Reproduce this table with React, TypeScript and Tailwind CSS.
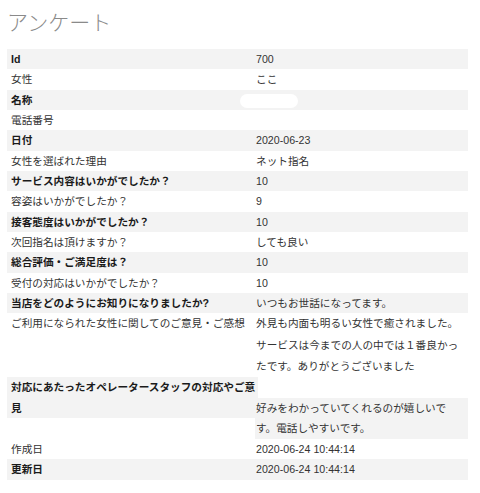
import React from "react";

type Row = { label: string; value: React.ReactNode };

const rows: Row[] = [
  { label: "Id", value: "700" },
  { label: "女性", value: "ここ" },
  { label: "名称", value: "" },
  { label: "電話番号", value: "" },
  { label: "日付", value: "2020-06-23" },
  { label: "女性を選ばれた理由", value: "ネット指名" },
  { label: "サービス内容はいかがでしたか？", value: "10" },
  { label: "容姿はいかがでしたか？", value: "9" },
  { label: "接客態度はいかがでしたか？", value: "10" },
  { label: "次回指名は頂けますか？", value: "しても良い" },
  { label: "総合評価・ご満足度は？", value: "10" },
  { label: "受付の対応はいかがでしたか？", value: "10" },
  { label: "当店をどのようにお知りになりましたか?", value: "いつもお世話になってます。" },
];

const font = "font-['Liberation_Sans','Noto_Sans_CJK_JP',sans-serif]";

function SimpleRow({ row, index }: { row: Row; index: number }) {
  const striped = index % 2 === 0;
  return (
    <div className={`flex leading-[20.33px] ${striped ? "bg-[#f3f3f3]" : ""}`}>
      <div
        className={`w-[248px] shrink-0 pl-1 whitespace-nowrap ${
          striped ? "font-bold text-[#1a1a1a]" : "text-[#333]"
        }`}
      >
        {row.label}
      </div>
      <div className="relative flex-1 pl-px text-[#333]">
        {row.label === "名称" ? (
          <span className="absolute left-[-15px] top-[4px] h-[14px] w-[58px] rounded-full bg-white" />
        ) : (
          row.value
        )}
      </div>
    </div>
  );
}

export default function App() {
  return (
    <div className={`${font} w-[480px] bg-white px-[7px] pb-4 text-[10.65px]`}>
      <h1 className="pt-[12px] pb-[16px] text-[21px] leading-[21px] font-light text-[#8a8a8a]">
        アンケート
      </h1>

      <div className="w-[461px]">
        {rows.map((row, i) => (
          <SimpleRow key={row.label} row={row} index={i} />
        ))}

        {/* ご意見・ご感想 */}
        <div className="flex leading-[21.33px]">
          <div className="w-[248px] shrink-0 whitespace-nowrap pl-1 text-[#333]">
            ご利用になられた女性に関してのご意見・ご感想
          </div>
          <div className="flex-1 whitespace-nowrap pl-px text-[#333]">
            外見も内面も明るい女性で癒されました。
            <br />
            サービスは今までの人の中では１番良かっ
            <br />
            たです。ありがとうございました
          </div>
        </div>

        {/* オペレーター */}
        <div className="grid grid-cols-[248px_1fr] grid-rows-[20.6px_20.6px_20.6px] leading-[20.6px]">
          <div className="col-start-1 row-span-2 row-start-1 w-[251px] whitespace-nowrap bg-[#f3f3f3] pl-1 font-bold text-[#1a1a1a]">
            対応にあたったオペレータースタッフの対応やご意
            <br />
            見
          </div>
          <div className="col-start-2 row-span-2 row-start-2 whitespace-nowrap bg-[#f3f3f3] pl-px text-[#333]">
            好みをわかっていてくれるのが嬉しいで
            <br />
            す。電話しやすいです。
          </div>
        </div>

        <div className="flex leading-[20.33px]">
          <div className="w-[248px] shrink-0 pl-1 text-[#333]">作成日</div>
          <div className="flex-1 pl-px text-[#333]">2020-06-24 10:44:14</div>
        </div>
        <div className="flex bg-[#f3f3f3] leading-[20.33px]">
          <div className="w-[248px] shrink-0 pl-1 font-bold text-[#1a1a1a]">更新日</div>
          <div className="flex-1 pl-px text-[#333]">2020-06-24 10:44:14</div>
        </div>
      </div>
    </div>
  );
}
